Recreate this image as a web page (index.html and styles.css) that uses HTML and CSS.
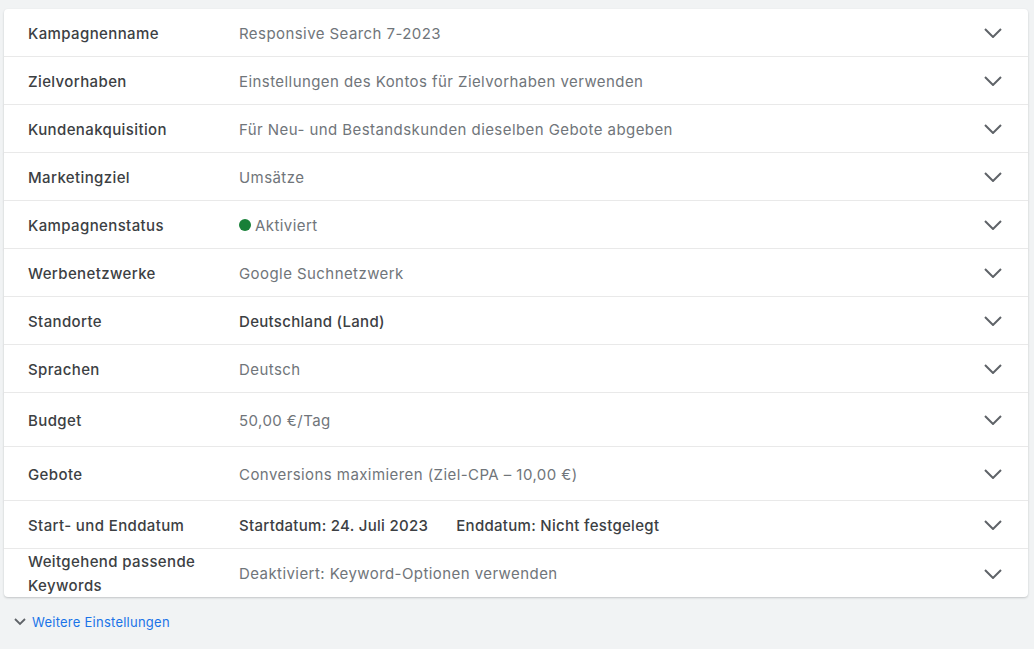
FILE: index.html
```html
<!DOCTYPE html>
<html lang="de">
<head>
<meta charset="utf-8">
<link rel="stylesheet" href="styles.css">
</head>
<body>
<div class="panel">
  <div class="row"><div class="label">Kampagnenname</div><div class="value">Responsive Search 7-2023</div><svg class="chev" viewBox="0 0 18 10"><path d="M1 1l8 8 8-8"/></svg></div>
  <div class="row"><div class="label">Zielvorhaben</div><div class="value">Einstellungen des Kontos für Zielvorhaben verwenden</div><svg class="chev" viewBox="0 0 18 10"><path d="M1 1l8 8 8-8"/></svg></div>
  <div class="row"><div class="label">Kundenakquisition</div><div class="value">Für Neu- und Bestandskunden dieselben Gebote abgeben</div><svg class="chev" viewBox="0 0 18 10"><path d="M1 1l8 8 8-8"/></svg></div>
  <div class="row"><div class="label">Marketingziel</div><div class="value">Umsätze</div><svg class="chev" viewBox="0 0 18 10"><path d="M1 1l8 8 8-8"/></svg></div>
  <div class="row"><div class="label">Kampagnenstatus</div><div class="value"><span class="dot"></span>Aktiviert</div><svg class="chev" viewBox="0 0 18 10"><path d="M1 1l8 8 8-8"/></svg></div>
  <div class="row"><div class="label">Werbenetzwerke</div><div class="value">Google Suchnetzwerk</div><svg class="chev" viewBox="0 0 18 10"><path d="M1 1l8 8 8-8"/></svg></div>
  <div class="row"><div class="label">Standorte</div><div class="value strong">Deutschland (Land)</div><svg class="chev" viewBox="0 0 18 10"><path d="M1 1l8 8 8-8"/></svg></div>
  <div class="row"><div class="label">Sprachen</div><div class="value">Deutsch</div><svg class="chev" viewBox="0 0 18 10"><path d="M1 1l8 8 8-8"/></svg></div>
  <div class="row tall"><div class="label">Budget</div><div class="value">50,00 €/Tag</div><svg class="chev" viewBox="0 0 18 10"><path d="M1 1l8 8 8-8"/></svg></div>
  <div class="row tall"><div class="label">Gebote</div><div class="value">Conversions maximieren (Ziel-CPA – 10,00 €)</div><svg class="chev" viewBox="0 0 18 10"><path d="M1 1l8 8 8-8"/></svg></div>
  <div class="row"><div class="label">Start- und Enddatum</div><div class="value strong dates"><span>Startdatum: 24. Juli 2023</span><span>Enddatum: Nicht festgelegt</span></div><svg class="chev" viewBox="0 0 18 10"><path d="M1 1l8 8 8-8"/></svg></div>
  <div class="row"><div class="label two">Weitgehend passende Keywords</div><div class="value">Deaktiviert: Keyword-Optionen verwenden</div><svg class="chev" viewBox="0 0 18 10"><path d="M1 1l8 8 8-8"/></svg></div>
</div>
<a class="more" href="#"><svg class="more-chev" viewBox="0 0 12 8"><path d="M1 1l5 5 5-5"/></svg>Weitere Einstellungen</a>
</body>
</html>
```

FILE: styles.css
```css
html, body {
  margin: 0;
  padding: 0;
  background: #f1f3f4;
}
body {
  font-family: Inter, Roboto, sans-serif;
  padding: 9px 6px 0 4px;
}
.panel {
  display: flex;
  flex-direction: column;
}
.row {
  box-sizing: border-box;
  display: flex;
  align-items: center;
  height: 48px;
  background: #fff;
  border-bottom: 1px solid #ececec;
  box-shadow: 0 1px 2px rgba(60,64,67,0.25);
  padding: 1px 26px 0 24px;
}
.row:first-child { border-radius: 4px 4px 0 0; }
.row:last-child { border-radius: 0 0 4px 4px; border-bottom: none; }
.row.tall { height: 54px; }
.label {
  width: 211px;
  flex: none;
  font-size: 15px;
  font-weight: 500;
  color: #3c4043;
  letter-spacing: 0.38px;
}
.label.two { line-height: 24px; }
.value {
  flex: 1;
  font-size: 15px;
  color: #70757a;
  letter-spacing: 0.43px;
  display: flex;
  align-items: center;
}
.value.strong { color: #3c4043; font-weight: 500; letter-spacing: 0.3px; }
.dates { gap: 28px; }
.dot {
  width: 12px;
  height: 12px;
  border-radius: 50%;
  background: #188038;
  margin-right: 4px;
}
.chev {
  width: 18px;
  height: 10px;
  flex: none;
  fill: none;
  stroke: #5f6368;
  stroke-width: 2;
}
.more {
  display: inline-flex;
  align-items: center;
  margin: 17px 0 0 10px;
  font-size: 13px;
  color: #1a73e8;
  text-decoration: none;
  letter-spacing: 0.25px;
}
.more-chev {
  width: 12px;
  height: 8px;
  margin-right: 6px;
  fill: none;
  stroke: #5f6368;
  stroke-width: 1.8;
}
```
